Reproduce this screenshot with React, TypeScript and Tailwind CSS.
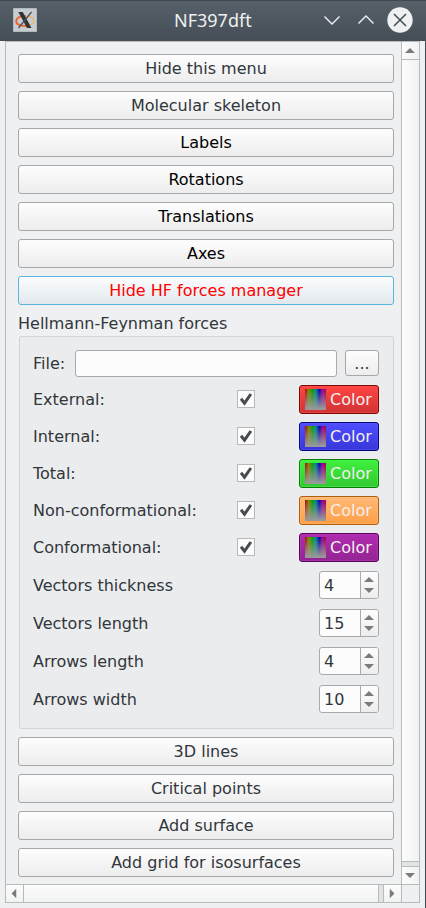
import React from "react";

const BUTTON =
  "flex h-[29px] w-full shrink-0 items-center justify-center rounded-[3px] border bg-gradient-to-b leading-none whitespace-nowrap";
const NORMAL = "border-[#a5a7a8] from-[#fdfdfd] to-[#ededee]";

function MenuButton({ label, tone = "text-[#31363b]" }: { label: string; tone?: string }) {
  return <button className={`${BUTTON} ${NORMAL} ${tone}`}>{label}</button>;
}

const SPECTRUM =
  "h-[21px] w-[21px] bg-[linear-gradient(to_top,#999_5%,#99999900_100%),linear-gradient(to_right,#a50000,#8a8500_18%,#00a000_36%,#009090_50%,#0000a8_68%,#a000a0_84%,#a50020)]";

const forces = [
  { label: "External:", style: "border-[#7d0808] from-[#ff4444] to-[#d03434] shadow-[inset_0_0_0_1px_#ff505066]" },
  { label: "Internal:", style: "border-[#04047d] from-[#4e4eff] to-[#3737da] shadow-[inset_0_0_0_1px_#6060ff66]" },
  { label: "Total:", style: "border-[#087d08] from-[#3ff03f] to-[#32c832] shadow-[inset_0_0_0_1px_#50ff5066]" },
  { label: "Non-conformational:", style: "border-[#b0600c] from-[#ffb976] to-[#ff9f45] shadow-[inset_0_0_0_1px_#ffc08066]" },
  { label: "Conformational:", style: "border-[#570657] from-[#b02cb0] to-[#942494] shadow-[inset_0_0_0_1px_#c040c066]" },
];

const sizes = [
  { label: "Vectors thickness", value: 4 },
  { label: "Vectors length", value: 15 },
  { label: "Arrows length", value: 4 },
  { label: "Arrows width", value: 10 },
];

function Triangle({ turn = "" }: { turn?: string }) {
  return (
    <svg className={`shrink-0 ${turn}`} width="10" height="5" viewBox="0 0 10 5">
      <path d="M0 5 5 0 10 5Z" fill="#797b7e" />
    </svg>
  );
}

function Check() {
  return (
    <span className="-mt-px flex h-[18px] w-[18px] items-center justify-center border border-[#b6b8ba] bg-[#fcfcfc]">
      <svg width="14" height="14" viewBox="0 0 14 14">
        <path d="M2 6.8 5.5 11.2 11.9 2" fill="none" stroke="#474b4f" strokeWidth="3" />
      </svg>
    </span>
  );
}

function TitleBar() {
  return (
    <header className="flex h-[41px] shrink-0 items-center border-t border-[#3f484f] bg-gradient-to-b from-[#566069] to-[#454e55] pl-[13px] pr-[12px]">
      <svg width="24" height="24" viewBox="0 0 24 24" className="-mt-[2px] shrink-0">
        <rect width="24" height="24" rx="1.5" fill="#c6cccf" />
        <rect x=".5" y=".5" width="23" height="23" rx="1" fill="none" stroke="#b2b9bc" />
        <path d="M13 8.2C7 7.500 3.200 10 3.200 13.200c0 3.300 4.500 5 10.300 4.600" fill="none" stroke="#ee622e" strokeWidth="1.8" />
        <path d="M15.500 8.400c7.500 1.600 7.500 7.600-1 9.200" fill="none" stroke="#efb35b" strokeWidth="1.2" />
        <path d="M5.300 4H9.800L18.500 20h-4.500Z" fill="#2f3436" />
        <path d="M18.500 4 5.500 20" stroke="#4a4f52" strokeWidth="1.2" />
      </svg>
      <h1 className="-mt-[2px] ml-[137px] w-[78px] whitespace-nowrap font-['Noto_Sans',sans-serif] text-[18px] leading-none text-[#eff0f1]">
        NF397dft
      </h1>
      <svg className="-mt-[2px] ml-auto shrink-0" width="90" height="26" viewBox="0 0 90 26" fill="none">
        <path d="m.5 9.500 7.500 7.500 7.500-7.500M34.500 16.500 42 9l7.500 7.500" stroke="#eff0f1" strokeWidth="1.400" />
        <circle cx="76" cy="13" r="12.700" fill="#eff0f1" />
        <path d="m70 7 12 12M82 7 70 19" stroke="#434b52" strokeWidth="1.500" />
      </svg>
    </header>
  );
}

function ForcesPanel() {
  return (
    <section className="ml-px h-[393px] shrink-0 rounded-[2px] border border-[#d2d4d6] bg-[#ebecee] pl-[13px] pr-[14px] pt-[13px]">
      <div className="flex h-[28px] items-start">
        <label className="w-[42px] leading-[27px]">File:</label>
        <input className="h-[27px] w-[262px] rounded-[3px] border border-[#a8aaac] bg-[#fcfcfc]" />
        <button className="ml-[8px] h-[26px] w-[34px] rounded-[3px] border border-[#a5a7a8] bg-gradient-to-b from-[#fdfdfd] to-[#ededee] leading-[25px]">
          ...
        </button>
      </div>
      <div className="mt-[7px] flex flex-col gap-[8px]">
        {forces.map((f) => (
          <div key={f.label} className="flex h-[29px] items-center">
            <span className="w-[204px] whitespace-nowrap leading-none">{f.label}</span>
            <Check />
            <button
              className={`ml-auto flex h-[29px] w-[80px] items-center rounded-[3px] border bg-gradient-to-b pl-[5px] leading-none text-[#f5efef] ${f.style}`}
            >
              <span className={SPECTRUM} />
              <span className="ml-[4px]">Color</span>
            </button>
          </div>
        ))}
      </div>
      <div className="mt-[9px] flex flex-col gap-[10px]">
        {sizes.map((s) => (
          <div key={s.label} className="flex h-[28px] items-center justify-between">
            <span className="pt-[2px] leading-none">{s.label}</span>
            <div className="flex h-[28px] w-[60px] overflow-hidden rounded-[3px] border border-[#a8aaac] bg-[#fcfcfc]">
              <span className="w-[41px] border-r border-[#a8aaac] pl-[4px] leading-[27px]">{s.value}</span>
              <span className="flex flex-1 flex-col items-center gap-[6px] bg-gradient-to-b from-[#fdfdfd] to-[#ededee] pr-px pt-[5px]">
                <Triangle />
                <Triangle turn="rotate-180" />
              </span>
            </div>
          </div>
        ))}
      </div>
    </section>
  );
}

export default function App() {
  return (
    <div className="flex h-[908px] w-[426px] flex-col overflow-hidden bg-[#eff0f1] font-['DejaVu_Sans',sans-serif] text-[16px] text-[#31363b]">
      <TitleBar />
      <div className="flex flex-1 border-r border-[#3f4b58] pb-[5px] pl-[5px] pr-[5px]">
        <main className="flex h-[862px] w-[415px] flex-col border border-[#b8babb] bg-[#eff0f2]">
          <div className="flex h-[842px]">
            <div className="flex w-[395px] flex-col gap-[8px] pl-[12px] pr-[7px] pt-[12px]">
              <MenuButton label="Hide this menu" />
              <MenuButton label="Molecular skeleton" />
              <MenuButton label="Labels" tone="text-black" />
              <MenuButton label="Rotations" tone="text-black" />
              <MenuButton label="Translations" tone="text-black" />
              <MenuButton label="Axes" tone="text-black" />
              <button className={`${BUTTON} border-[#5ab5e2] from-[#fcfdfd] to-[#e1e8ed] text-[#ff0000]`}>
                Hide HF forces manager
              </button>
              <div className="-mt-[8px] flex flex-col">
                <h2 className="h-[31px] leading-[38px]">Hellmann-Feynman forces</h2>
                <ForcesPanel />
              </div>
              <MenuButton label="3D lines" />
              <MenuButton label="Critical points" />
              <MenuButton label="Add surface" />
              <MenuButton label="Add grid for isosurfaces" />
            </div>
            <div className="flex w-[18px] flex-col border-l border-[#b8babb] bg-gradient-to-r from-[#fcfcfc] to-[#f1f2f2]">
              <div className="flex h-[18px] items-center justify-center border-b border-[#b8babb] pr-px">
                <Triangle />
              </div>
              <div className="mt-auto h-[6px] border-y border-[#b8babb] bg-[#e2e4e4]" />
              <div className="flex h-[17px] items-center justify-center pb-px pr-px">
                <Triangle turn="rotate-180" />
              </div>
            </div>
          </div>
          <div className="flex h-[18px] border-t border-[#b8babb] bg-gradient-to-b from-[#fcfcfc] to-[#f1f2f2]">
            <div className="flex w-[18px] items-center justify-center border-r border-[#b8babb] pb-px pr-px">
              <Triangle turn="-rotate-90" />
            </div>
            <div className="ml-auto w-[6px] border-x border-[#b8babb] bg-[#e2e4e4]" />
            <div className="flex w-[17px] items-center justify-center pb-px pr-px">
              <Triangle turn="rotate-90" />
            </div>
            <div className="w-[18px] border-l border-[#b8babb] bg-[#eff0f2]" />
          </div>
        </main>
      </div>
    </div>
  );
}
